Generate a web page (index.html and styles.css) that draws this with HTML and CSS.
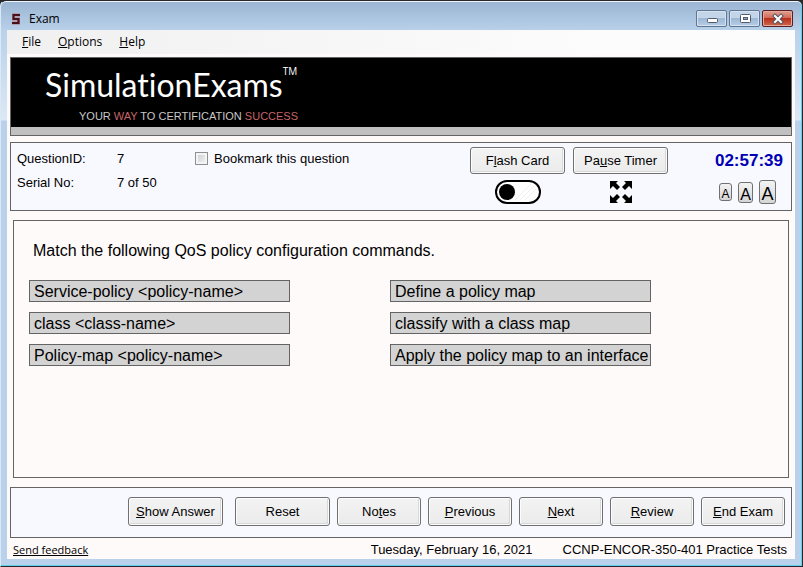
FILE: index.html
```html
<!DOCTYPE html>
<html lang="en">
<head>
  <meta charset="UTF-8">
  <meta name="viewport" content="width=device-width, initial-scale=1.0">
  <title>Exam</title>
  <link rel="stylesheet" href="styles.css">
</head>
<body>
  <div class="window">
    <header class="titlebar">
      <svg class="app-icon" width="10" height="14" viewBox="0 0 10 14">
        <path d="M9 3H2.500v4H7.500v4H1" fill="none" stroke="#a87a88" stroke-width="3"/>
        <path d="M9 3H2.500v4H7.500v4H1" fill="none" stroke="#4a0f19" stroke-width="2"/>
      </svg>
      <h1>Exam</h1>
      <div class="window-buttons">
        <button aria-label="Minimize">
          <svg width="12" height="12" viewBox="0 0 12 12"><rect x="1.500" y="5.500" width="10" height="4" rx="1" fill="#fff" stroke="#535b68"/></svg>
        </button>
        <button aria-label="Maximize">
          <svg width="12" height="12" viewBox="0 0 12 12"><rect x="1.500" y="1.500" width="10" height="8" rx="1" fill="#fff" stroke="#535b68"/><rect x="4.500" y="4.500" width="4" height="2" fill="#8ea9c9" stroke="#535b68"/></svg>
        </button>
        <button class="close" aria-label="Close">
          <svg width="12" height="12" viewBox="0 0 12 12"><path d="M3 3l6 6M9 3l-6 6" stroke="#535666" stroke-width="4" stroke-linecap="square"/><path d="M3 3l6 6M9 3l-6 6" stroke="#fff" stroke-width="2" stroke-linecap="square"/></svg>
        </button>
      </div>
    </header>

    <div class="client">
      <nav class="menu">
        <a href="#"><u>F</u>ile</a>
        <a href="#"><u>O</u>ptions</a>
        <a href="#"><u>H</u>elp</a>
      </nav>

      <div class="banner">
        <div class="logo">
          <p class="brand">SimulationExams<sup>TM</sup></p>
          <p class="tagline">YOUR <span>WAY</span> TO CERTIFICATION <span>SUCCESS</span></p>
        </div>
      </div>

      <section class="info">
        <dl>
          <dt>QuestionID:</dt><dd>7</dd>
          <dt>Serial No:</dt><dd>7 of 50</dd>
        </dl>
        <div class="bookmark">
          <input type="checkbox" id="bookmark">
          <label for="bookmark">Bookmark this question</label>
        </div>
        <div class="tools">
          <button class="btn">F<u>l</u>ash Card</button>
          <button class="btn">Pa<u>u</u>se Timer</button>
          <time class="timer">02:57:39</time>
          <button class="icon-btn" aria-label="Toggle theme">
            <svg width="46" height="24" viewBox="0 0 46 24">
              <rect x="1" y="1" width="44" height="22" rx="11" fill="#fff" stroke="#000" stroke-width="2"/>
              <path d="M20 20L36 4M25 20L39 6M30 20L41 9" stroke="#f0f0f0"/>
              <circle cx="12" cy="12" r="8" fill="#000"/>
            </svg>
          </button>
          <button class="icon-btn" aria-label="Full screen">
            <svg width="22" height="22" viewBox="0 0 22 22">
              <path d="M0 0h8L6 2l4 4-3 3-4-4-3 3zM22 0v8l-3-3-4 4-3-3 4-4-2-2zM0 22v-8l3 3 4-4 3 3-4 4 2 2zM22 22h-8l2-2-4-4 3-3 4 4 3-3z"/>
            </svg>
          </button>
          <div class="sizes">
            <button class="size small" aria-label="Small text">A</button>
            <button class="size medium" aria-label="Medium text">A</button>
            <button class="size large" aria-label="Large text">A</button>
          </div>
        </div>
      </section>

      <main class="question">
        <h2>Match the following QoS policy configuration commands.</h2>
        <div class="match">
          <ul>
            <li>Service-policy &lt;policy-name&gt;</li>
            <li>class &lt;class-name&gt;</li>
            <li>Policy-map &lt;policy-name&gt;</li>
          </ul>
          <ul>
            <li>Define a policy map</li>
            <li>classify with a class map</li>
            <li>Apply the policy map to an interface</li>
          </ul>
        </div>
      </main>

      <section class="actions">
        <div class="action-group">
          <button class="btn"><u>S</u>how Answer</button>
          <button class="btn">Reset</button>
        </div>
        <button class="btn">No<u>t</u>es</button>
        <button class="btn"><u>P</u>revious</button>
        <button class="btn"><u>N</u>ext</button>
        <button class="btn"><u>R</u>eview</button>
        <button class="btn"><u>E</u>nd Exam</button>
      </section>

      <footer>
        <a href="#">Send feedback</a>
        <span class="date">Tuesday, February 16, 2021</span>
        <span>CCNP-ENCOR-350-401 Practice Tests</span>
      </footer>
    </div>
  </div>
</body>
</html>
```

FILE: styles.css
```css
* {
  margin: 0;
  padding: 0;
  box-sizing: border-box;
}

body {
  background-color: #26282c;
  font-family: "Liberation Sans", Arial, sans-serif;
  font-size: 13px;
  color: #000;
}

button {
  font-family: inherit;
  color: inherit;
}

/* Window frame */
.window {
  display: flex;
  flex-direction: column;
  min-height: 100vh;
  padding: 0 7px 7px 6px;
  border: 1px solid #26282c;
  border-left-color: #dbe8f5;
  border-radius: 6px 6px 0 0;
  background: linear-gradient(#9ab4d2, #b9d1ea 30px, #dce8f5 119px, #b9d1ea 120px);
  box-shadow: inset 0 1px #f0f6fc, inset -1px -1px #5fcfee;
}

.titlebar {
  display: flex;
  align-items: center;
  height: 29px;
  padding: 6px 2px 0 4px;
}

.titlebar h1 {
  flex: 1;
  margin-left: 8px;
  font: 12px "Open Sans", sans-serif;
}

.window-buttons {
  display: flex;
  gap: 2px;
}

.window-buttons button {
  display: flex;
  justify-content: center;
  align-items: center;
  width: 31px;
  height: 17px;
  border: 1px solid #5f7590;
  border-radius: 2px;
  background: linear-gradient(#c3d5e9 50%, #9db8d6 50%, #b6cde5);
  box-shadow: inset 0 0 0 1px #d5e3f2;
}

.window-buttons .close {
  border-color: #5a1e22;
  background: linear-gradient(#e0a094, #cf6650 50%, #b8301c 50%, #d0674c);
  box-shadow: inset 0 0 0 1px #e5aa9c;
}

/* Client area */
.client {
  flex: 1;
  display: flex;
  flex-direction: column;
  padding: 0 3px;
  background-color: #fffafa;
}

.menu {
  display: flex;
  gap: 17px;
  height: 24px;
  margin: 0 -3px 3px;
  padding-left: 15px;
  background: linear-gradient(90deg, #f0f0f0, #fcfcfc 75%);
  font: 12px/24px "Open Sans", sans-serif;
}

.menu a {
  color: #000;
  text-decoration: none;
}

/* Banner */
.banner {
  height: 79px;
  border: 1px solid #646464;
  border-bottom: 9px solid #c0c0c0;
  background-color: #000;
  outline: 1px solid #646464;
  outline-offset: -1px;
}

.logo {
  width: max-content;
  padding: 4px 0 0 34px;
  color: #fff;
}

.brand {
  font: 32px/46px Lato, "Open Sans", sans-serif;
  font-variant-ligatures: none;
}

.brand sup {
  font: 10px/10px "Open Sans", sans-serif;
  vertical-align: 22px;
}

.tagline {
  padding-left: 34px;
  font-size: 11px;
  line-height: 16px;
  color: #c8c8c8;
}

.tagline span {
  color: #c86468;
}

/* Question info */
.info {
  display: flex;
  height: 69px;
  margin-top: 6px;
  padding: 4px 8px 0 6px;
  border: 1px solid #646464;
  background-color: #f8f8ff;
}

.info dl {
  display: grid;
  grid-template-columns: 100px 78px;
  align-content: start;
  line-height: 24px;
}

.bookmark {
  display: flex;
  align-items: center;
  gap: 6px;
  height: 22px;
}

.bookmark input {
  appearance: none;
  width: 13px;
  height: 13px;
  border: 1px solid #8e8f8f;
  background: linear-gradient(135deg, #c8ccd0, #f6f6f6);
  box-shadow: inset 0 0 0 2px #f4f4f4;
}

.tools {
  display: grid;
  grid-template-columns: 95px 95px 107px;
  grid-template-rows: 27px 24px;
  gap: 6px 8px;
  align-content: start;
  align-items: center;
  justify-items: center;
  margin-left: auto;
}

.btn {
  width: 84px;
  height: 29px;
  border: 1px solid #707070;
  border-radius: 3px;
  background: linear-gradient(#f3f3f3, #ebebeb);
  box-shadow: inset 0 0 0 1px #fcfcfc, inset -2px -2px #d8d8d8;
  font-size: 13px;
}

.tools .btn {
  width: 95px;
  height: 27px;
}

.timer {
  justify-self: end;
  font-size: 17px;
  font-weight: bold;
  line-height: 24px;
  color: #0000b4;
}

.icon-btn {
  display: flex;
  border: none;
  background: none;
}

.sizes {
  display: flex;
  align-items: center;
  justify-self: end;
  gap: 6px;
  padding-right: 7px;
}

.size {
  padding-top: 3px;
  border: 1px solid #707070;
  border-radius: 3px;
  background: linear-gradient(#f3f3f3, #d6d6d6);
}

.small {
  width: 13px;
  height: 18px;
  font-size: 12px;
}

.medium {
  width: 15px;
  height: 21px;
  font-size: 16px;
}

.large {
  width: 17px;
  height: 24px;
  font-size: 18px;
}

/* Question */
.question {
  flex: 1;
  margin: 9px 3px;
  padding: 19px 15px;
  border: 1px solid #646464;
  font-size: 16px;
}

.question h2 {
  padding-left: 4px;
  font-size: 16px;
  font-weight: normal;
  line-height: 22px;
}

.match {
  display: flex;
  gap: 100px;
  margin-top: 18px;
}

.match ul {
  display: flex;
  flex-direction: column;
  gap: 10px;
  width: 261px;
  list-style: none;
}

.match li {
  height: 22px;
  padding-left: 4px;
  border: 1px solid #646464;
  background-color: #d3d3d3;
  line-height: 21px;
  white-space: nowrap;
}

/* Bottom buttons */
.actions {
  display: flex;
  justify-content: flex-end;
  gap: 7px;
  padding: 9px 6px 11px;
  border: 1px solid #646464;
  background-color: #f8f8ff;
}

.action-group {
  display: flex;
  gap: 12px;
}

.action-group .btn {
  width: 95px;
}

footer {
  display: flex;
  align-items: center;
  gap: 30px;
  height: 21px;
  padding: 1px 5px 0 3px;
}

footer a {
  font: 11px "Open Sans", sans-serif;
  color: #000;
}

.date {
  margin-left: auto;
}
```
